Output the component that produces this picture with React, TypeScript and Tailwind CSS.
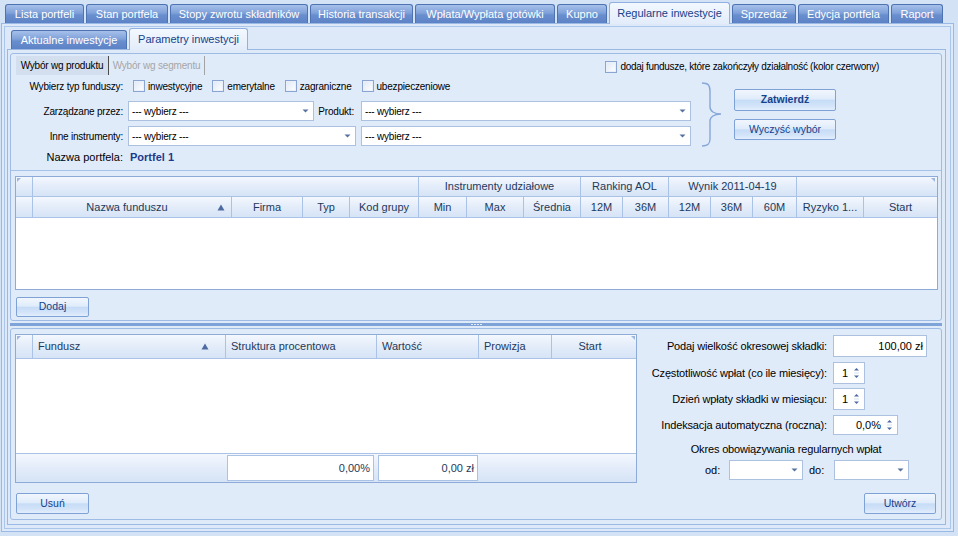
import React from "react";

const tabOff =
  "bg-[linear-gradient(to_bottom,#a6c0ea_0%,#7fa1d9_45%,#6a8fcf_55%,#5c83c6_100%)] border border-[#4e73b3] text-white";
const btnBg =
  "bg-[linear-gradient(to_bottom,#f1f6fd_0%,#e0ecfb_45%,#c6dcf6_52%,#d3e4f9_80%,#e2eefc_100%)] border border-[#7fa2d6] rounded-[2px]";
const headBg = "bg-[linear-gradient(to_bottom,#f4f8fe_0%,#e3ecf9_50%,#d6e4f7_100%)]";

const topTabs: [string, string, boolean?][] = [
  ["Lista portfeli", "w-[79px]"],
  ["Stan portfela", "w-[82px]"],
  ["Stopy zwrotu składników", "w-[138px]"],
  ["Historia transakcji", "w-[103px]"],
  ["Wpłata/Wypłata gotówki", "w-[140px]"],
  ["Kupno", "w-[50px]"],
  ["Regularne inwestycje", "w-[121px]", true],
  ["Sprzedaż", "w-[64px]"],
  ["Edycja portfela", "w-[91px]"],
  ["Raport", "w-[52px]"],
];

const Arrow = () => (
  <svg width="7" height="4" viewBox="0 0 7 4" className="shrink-0">
    <path d="M0.5 0.5H6.5L3.5 3.5Z" fill="#55719f" />
  </svg>
);

const SortUp = () => (
  <svg width="8" height="7" viewBox="0 0 8 7" className="shrink-0">
    <path d="M4 0.5L7.5 6.5H0.5Z" fill="#4d6ba0" />
  </svg>
);

const Spin = () => (
  <svg width="7" height="16" viewBox="0 0 7 16" className="shrink-0">
    <path d="M1 5.5L3.5 3L6 5.5Z" fill="#4d6ba0" />
    <path d="M1 8H6" stroke="#d5e1f1" strokeWidth="1" />
    <path d="M1 10.5L3.5 13L6 10.5Z" fill="#4d6ba0" />
  </svg>
);

function Combo({ w, text }: { w: string; text?: string }) {
  return (
    <div
      className={`${w} h-[20px] bg-white border border-[#abc1df] flex items-center pl-[3px] pr-[4px] text-[10px] tracking-[-0.2px] text-black`}
    >
      <span className="flex-1">{text}</span>
      <Arrow />
    </div>
  );
}

function Check({ label, tight }: { label?: string; tight?: boolean }) {
  return (
    <div className="flex items-center">
      <div className="w-[12px] h-[12px] border border-[#8aa5d2] bg-[linear-gradient(135deg,#dfe8f5,#ffffff)] shadow-[inset_0_0_0_1px_#e9f0fa]" />
      {label && (
        <span
          className={`ml-[3px] text-[10px] text-black ${tight ? "tracking-[-0.28px]" : "tracking-[-0.2px]"}`}
        >
          {label}
        </span>
      )}
    </div>
  );
}

function Btn({ w, h, label, bold }: { w: string; h: string; label: string; bold?: boolean }) {
  return (
    <div
      className={`${w} ${h} ${btnBg} flex items-center justify-center text-[#15428b] ${
        bold ? "font-bold text-[10.5px]" : "text-[10.5px]"
      }`}
    >
      {label}
    </div>
  );
}

function H({ w, children, left, last }: { w: string; children?: React.ReactNode; left?: boolean; last?: boolean }) {
  return (
    <div
      className={`${w} h-full flex items-center ${left ? "justify-start pl-[5px]" : "justify-center"} ${
        last ? "" : "border-r border-[#a9c2e5]"
      } text-[11px] text-[#1e395b] whitespace-nowrap overflow-hidden`}
    >
      {children}
    </div>
  );
}

export default function App() {
  return (
    <div className="w-[958px] h-[536px] overflow-hidden bg-[#d4e2f5] font-['Liberation_Sans',Arial,sans-serif] select-none">
      {/* main tabs */}
      <div className="h-[23px] flex items-end pl-[5px] gap-[2px]">
        {topTabs.map(([label, w, active]) =>
          active ? (
            <div
              key={label}
              className={`${w} h-[22px] relative top-[1px] z-10 rounded-t-[3px] border border-b-0 border-[#8fb0e0] bg-[linear-gradient(to_bottom,#f3f8fe,#e2ecfa)] flex items-center justify-center text-[11px] text-[#15428b]`}
            >
              {label}
            </div>
          ) : (
            <div
              key={label}
              className={`${w} h-[19px] rounded-t-[3px] ${tabOff} border-b-0 flex items-center justify-center text-[11px]`}
            >
              {label}
            </div>
          )
        )}
      </div>

      <div className="ml-[1px] w-[953px] h-[509px] border border-[#9ab9e4] bg-[#dde9f8] p-[2px]">
        <div className="h-full border border-[#abc6eb] px-[2px] pt-[1px]">
          {/* inner tabs */}
          <div className="h-[21px] flex items-end pl-[4px] gap-[2px]">
            <div className={`w-[116px] h-[19px] rounded-t-[3px] ${tabOff} border-b-0 flex items-center justify-center text-[11px]`}>
              Aktualne inwestycje
            </div>
            <div className="w-[119px] h-[22px] relative top-[1px] z-10 rounded-t-[3px] border border-b-0 border-[#8fb0e0] bg-[linear-gradient(to_bottom,#f3f8fe,#e2ecfa)] flex items-center justify-center text-[11px] text-[#15428b]">
              Parametry inwestycji
            </div>
          </div>

          <div className="w-[939px] h-[476px] border border-[#99b8e3] bg-[#dfeaf9] pl-[2px] pr-[3px] pt-[3px]">
            {/* top panel */}
            <div className="w-[932px] h-[268px] rounded-[3px] border border-[#9dbbe5] bg-[#e0ebfa] flex flex-col">
              <div className="h-[117px] border-b border-[#a6c2e8] pt-[2px] pl-[5px]">
                <div className="h-[19px] flex items-stretch">
                  <div className="w-[93px] bg-[#d3deef] border-r border-[#4b4b4b] flex items-center justify-center text-[10px] tracking-[-0.2px] text-black">
                    Wybór wg produktu
                  </div>
                  <div className="w-[96px] border-r border-[#a3a3a3] flex items-center justify-center text-[10px] tracking-[-0.2px] text-[#a6a6a6]">
                    Wybór wg segmentu
                  </div>
                  <div className="ml-auto mr-[62px] mt-[3px] flex items-start">
                    <Check label="dodaj fundusze, które zakończyły działalność (kolor czerwony)" tight />
                  </div>
                </div>

                <div className="flex mt-[4px]">
                  <div className="w-[675px] flex flex-col">
                    <div className="h-[14px] flex items-center">
                      <span className="w-[107px] text-right text-[10px] tracking-[-0.2px] text-black">Wybierz typ funduszy:</span>
                      <div className="ml-[10px] flex items-center gap-[10px]">
                        <Check label="inwestycyjne" />
                        <Check label="emerytalne" />
                        <Check label="zagraniczne" />
                        <Check label="ubezpieczeniowe" />
                      </div>
                    </div>
                    <div className="h-[20px] mt-[8px] flex items-center">
                      <span className="w-[107px] text-right text-[10px] tracking-[-0.2px] text-black">Zarządzane przez:</span>
                      <div className="ml-[5px]">
                        <Combo w="w-[186px]" text="--- wybierz ---" />
                      </div>
                      <span className="w-[47px] text-right pr-[7px] text-[10px] tracking-[-0.2px] text-black">Produkt:</span>
                      <Combo w="w-[330px]" text="--- wybierz ---" />
                    </div>
                    <div className="h-[20px] mt-[5px] flex items-center">
                      <span className="w-[107px] text-right text-[10px] tracking-[-0.2px] text-black">Inne instrumenty:</span>
                      <div className="ml-[5px]">
                        <Combo w="w-[228px]" text="--- wybierz ---" />
                      </div>
                      <div className="ml-[5px]">
                        <Combo w="w-[330px]" text="--- wybierz ---" />
                      </div>
                    </div>
                    <div className="h-[14px] mt-[4px] flex items-center">
                      <span className="w-[107px] text-right text-[11px] text-black">Nazwa portfela:</span>
                      <span className="ml-[7px] text-[11px] font-bold text-[#1b3b8c]">Portfel 1</span>
                    </div>
                  </div>
                  <svg width="24" height="66" viewBox="0 0 24 66" className="ml-[9px] mt-[3px] shrink-0">
                    <path
                      d="M2 1 C8 1 10 3 10 9 L10 25 C10 29 14 32 21 32 C14 32 10 35 10 39 L10 57 C10 62 8 64 2 64"
                      fill="none"
                      stroke="#86a7d8"
                      strokeWidth="1.4"
                    />
                  </svg>
                  <div className="ml-[10px] mt-[10px] flex flex-col gap-[8px]">
                    <Btn w="w-[102px]" h="h-[22px]" label="Zatwierdź" bold />
                    <Btn w="w-[102px]" h="h-[21px]" label="Wyczyść wybór" />
                  </div>
                </div>
              </div>

              {/* funds grid */}
              <div className="pt-[5px] pl-[4px]">
                <div className="w-[923px] h-[114px] border border-[#8eabd8] bg-white flex flex-col relative">
                  <div className={`h-[20px] flex border-b border-[#a9c2e5] ${headBg}`}>
                    <H w="w-[17px]" />
                    <H w="w-[386px]" />
                    <H w="w-[162px]">Instrumenty udziałowe</H>
                    <H w="w-[88px]">Ranking AOL</H>
                    <H w="w-[128px]">Wynik 2011-04-19</H>
                    <H w="flex-1" last />
                  </div>
                  <div className={`h-[21px] flex border-b border-[#a9c2e5] ${headBg}`}>
                    <H w="w-[17px]" />
                    <div className="w-[199px] h-full flex items-center border-r border-[#a9c2e5] text-[11px] text-[#1e395b]">
                      <span className="flex-1 text-center pl-[4px]">Nazwa funduszu</span>
                      <span className="mr-[6px]">
                        <SortUp />
                      </span>
                    </div>
                    <H w="w-[71px]">Firma</H>
                    <H w="w-[47px]">Typ</H>
                    <H w="w-[69px]">Kod grupy</H>
                    <H w="w-[48px]">Min</H>
                    <H w="w-[57px]">Max</H>
                    <H w="w-[57px]">Średnia</H>
                    <H w="w-[42px]">12M</H>
                    <H w="w-[46px]">36M</H>
                    <H w="w-[42px]">12M</H>
                    <H w="w-[42px]">36M</H>
                    <H w="w-[44px]">60M</H>
                    <H w="w-[67px]">Ryzyko 1...</H>
                    <H w="flex-1" last>
                      Start
                    </H>
                  </div>
                  <div className="flex-1 bg-white" />
                  <svg width="4" height="4" className="absolute left-[1px] top-[1px]">
                    <path d="M0 0H4L0 4Z" fill="#9db8de" />
                  </svg>
                  <svg width="4" height="4" className="absolute right-[2px] top-[1px]">
                    <path d="M0 0H4V4Z" fill="#9db8de" />
                  </svg>
                </div>
                <div className="mt-[7px] ml-[1px]">
                  <Btn w="w-[73px]" h="h-[20px]" label="Dodaj" />
                </div>
              </div>
            </div>

            {/* splitter */}
            <div className="h-[7px] flex items-center">
              <div className="w-[932px] h-[3px] bg-[#7ea3d9] flex items-center justify-center gap-[1px]">
                <div className="w-[2px] h-[1px] bg-[#e4edf9]" />
                <div className="w-[2px] h-[1px] bg-[#e4edf9]" />
                <div className="w-[2px] h-[1px] bg-[#e4edf9]" />
                <div className="w-[2px] h-[1px] bg-[#e4edf9]" />
              </div>
            </div>

            {/* bottom panel */}
            <div className="w-[932px] h-[192px] rounded-[3px] border border-[#9dbbe5] bg-[#e0ebfa] flex pt-[5px] pl-[4px]">
              <div className="w-[622px] flex flex-col">
                <div className="w-[622px] h-[149px] border border-[#8eabd8] bg-white flex flex-col relative">
                  <div className={`h-[24px] flex border-b border-[#a9c2e5] ${headBg}`}>
                    <H w="w-[17px]" />
                    <div className="w-[193px] h-full flex items-center border-r border-[#a9c2e5] text-[11px] text-[#1e395b] pl-[5px]">
                      <span className="flex-1">Fundusz</span>
                      <span className="mr-[16px]">
                        <SortUp />
                      </span>
                    </div>
                    <H w="w-[151px]" left>
                      Struktura procentowa
                    </H>
                    <H w="w-[102px]" left>
                      Wartość
                    </H>
                    <H w="w-[73px]" left>
                      Prowizja
                    </H>
                    <div className="flex-1 h-full flex items-center justify-center pr-[8px] text-[11px] text-[#1e395b]">
                      Start
                    </div>
                  </div>
                  <div className="flex-1 bg-white" />
                  <div className={`h-[29px] border-t border-[#a9c2e5] flex items-center ${headBg}`}>
                    <div className="w-[211px]" />
                    <div className="w-[147px] h-[26px] border border-[#a9c2e5] bg-white flex items-center justify-end pr-[3px] text-[11px] text-[#1e395b]">
                      0,00%
                    </div>
                    <div className="ml-[4px] w-[100px] h-[26px] border border-[#a9c2e5] bg-white flex items-center justify-end pr-[3px] text-[11px] text-[#1e395b]">
                      0,00 zł
                    </div>
                  </div>
                  <svg width="4" height="4" className="absolute left-[1px] top-[1px]">
                    <path d="M0 0H4L0 4Z" fill="#9db8de" />
                  </svg>
                  <svg width="4" height="4" className="absolute right-[1px] top-[1px]">
                    <path d="M0 0H4V4Z" fill="#9db8de" />
                  </svg>
                </div>
                <div className="mt-[10px] ml-[1px]">
                  <Btn w="w-[73px]" h="h-[21px]" label="Usuń" />
                </div>
              </div>

              {/* form */}
              <div className="w-[304px] flex flex-col text-[11px] text-black">
                <div className="h-[22px] mt-[1px] flex items-center">
                  <span className="w-[190px] text-right tracking-[-0.15px]">Podaj wielkość okresowej składki:</span>
                  <div className="ml-[6px] w-[94px] h-[22px] bg-white border border-[#abc1df] flex items-center justify-end pr-[3px]">
                    100,00 zł
                  </div>
                </div>
                <div className="h-[22px] mt-[5px] flex items-center">
                  <span className="w-[190px] text-right tracking-[-0.15px]">Częstotliwość wpłat (co ile miesięcy):</span>
                  <div className="ml-[6px] w-[32px] h-[22px] bg-white border border-[#abc1df] flex items-center justify-end pr-[4px] gap-[5px]">
                    <span>1</span>
                    <Spin />
                  </div>
                </div>
                <div className="h-[22px] mt-[4px] flex items-center">
                  <span className="w-[190px] text-right tracking-[-0.15px]">Dzień wpłaty składki w miesiącu:</span>
                  <div className="ml-[6px] w-[32px] h-[22px] bg-white border border-[#abc1df] flex items-center justify-end pr-[4px] gap-[5px]">
                    <span>1</span>
                    <Spin />
                  </div>
                </div>
                <div className="h-[20px] mt-[5px] flex items-center">
                  <span className="w-[190px] text-right tracking-[-0.15px]">Indeksacja automatyczna (roczna):</span>
                  <div className="ml-[6px] w-[65px] h-[20px] bg-white border border-[#abc1df] flex items-center justify-end pr-[4px] gap-[5px]">
                    <span>0,0%</span>
                    <Spin />
                  </div>
                </div>
                <div className="h-[14px] mt-[7px] w-[298px] flex items-center justify-center tracking-[-0.15px]">
                  Okres obowiązywania regularnych wpłat
                </div>
                <div className="h-[20px] mt-[4px] flex items-center">
                  <span className="ml-[68px] w-[16px]">od:</span>
                  <div className="ml-[8px]">
                    <Combo w="w-[74px]" />
                  </div>
                  <span className="ml-[6px] w-[19px]">do:</span>
                  <div className="ml-[6px]">
                    <Combo w="w-[75px]" />
                  </div>
                </div>
                <div className="mt-[13px] ml-[227px]">
                  <Btn w="w-[72px]" h="h-[21px]" label="Utwórz" />
                </div>
              </div>
            </div>
          </div>
        </div>
      </div>
    </div>
  );
}
